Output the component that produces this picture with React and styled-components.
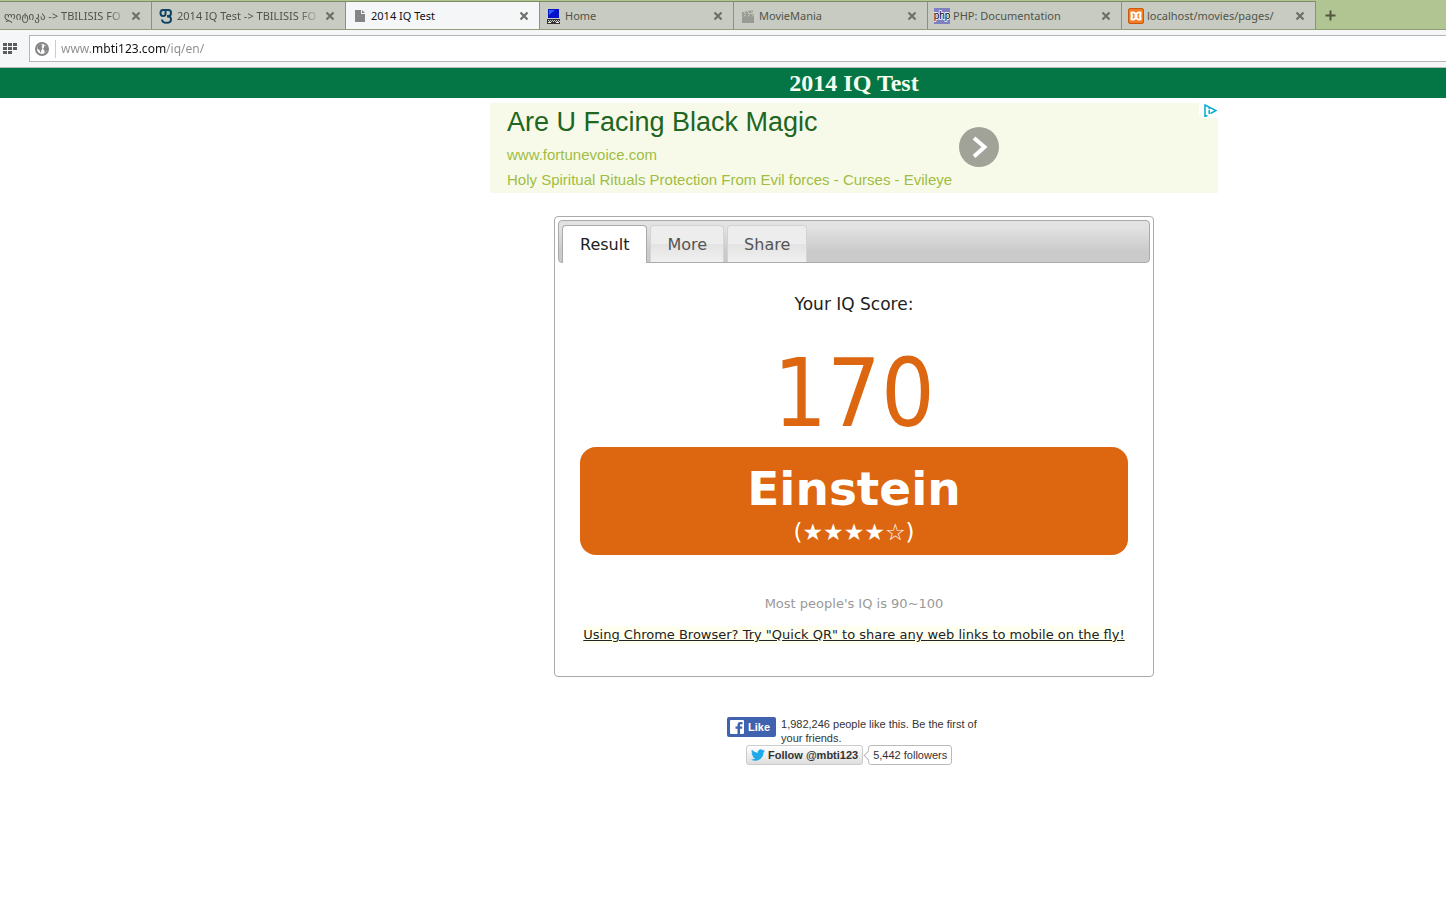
import React, { useState } from "react";
import styled, { createGlobalStyle, css } from "styled-components";

const GlobalStyle = createGlobalStyle`
  * {
    box-sizing: border-box;
  }
  body {
    margin: 0;
    background-color: #fff;
    overflow-x: hidden;
  }
  button {
    font: inherit;
    cursor: pointer;
  }
`;

const uiFont = `"Noto Sans", "Open Sans", "DejaVu Sans", sans-serif`;
const pageFont = `"DejaVu Sans", Verdana, sans-serif`;
const adFont = `"Liberation Sans", Arial, sans-serif`;

/* ---------- browser ---------- */

const TabStrip = styled.div`
  display: flex;
  height: 30px;
  padding-top: 1px;
  background-color: #b1c592;
  border-bottom: 1px solid #929d7a;
  overflow: hidden;
`;

const BrowserTab = styled.div`
  flex: 0 0 ${(props) => (props.$clipped ? "152px" : "194px")};
  display: flex;
  align-items: center;
  gap: 3px;
  height: ${(props) => (props.$active ? "29px" : "28px")};
  padding: 0 10px 0 ${(props) => (props.$clipped ? "4px" : "6px")};
  background-color: ${(props) => (props.$active ? "#f5f6f8" : "#c8cbc1")};
  border-top: 1px solid #7d8a63;
  border-right: 1px solid #8b9180;
  font-family: ${uiFont};
  font-size: 11px;
  color: ${(props) => (props.$active ? "#111" : "#50534b")};
`;

const TabLabel = styled.span`
  flex: 1;
  min-width: 0;
  overflow: hidden;
  white-space: nowrap;
  line-height: 20px;
  ${(props) =>
    props.$fade &&
    css`
      mask-image: linear-gradient(90deg, #000 84%, transparent 100%);
    `}
`;

const IconButton = styled.button`
  display: flex;
  align-items: center;
  justify-content: center;
  padding: 0;
  border: none;
  background: transparent;
`;

const NewTab = styled(IconButton)`
  width: 28px;
  height: 28px;
`;

const Toolbar = styled.div`
  display: flex;
  align-items: center;
  height: 38px;
  padding-left: 3px;
  background-color: #f5f6f8;
  border-bottom: 1px solid #b9bbc0;
`;

const AddressBar = styled.label`
  flex: 1;
  display: flex;
  align-items: center;
  height: 27px;
  margin-left: 12px;
  padding-left: 5px;
  background-color: #fff;
  border: 1px solid #b3b5b8;
  border-right: none;
`;

const Divider = styled.span`
  width: 1px;
  height: 18px;
  margin: 0 5px 0 6px;
  background-color: #ccc;
`;

/* the domain is darker than the rest of the address */
const AddressInput = styled.input`
  flex: 1;
  min-width: 0;
  height: 22px;
  padding: 0;
  border: none;
  outline: none;
  font-family: ${uiFont};
  font-size: 12px;
  color: transparent;
  background-image: linear-gradient(
    90deg,
    #8c8c8c 30px,
    #111 30px,
    #111 105px,
    #8c8c8c 105px
  );
  background-clip: text;
`;

/* ---------- page ---------- */

const Header = styled.header`
  padding-left: 262px;
  background-color: #047646;
`;

const Title = styled.h1`
  margin: 0;
  font-family: Georgia, "Liberation Serif", serif;
  font-size: 24px;
  line-height: 30px;
  text-align: center;
  color: #f4fff0;
`;

const Main = styled.main`
  display: flex;
  flex-direction: column;
  align-items: center;
  padding: 5px 0 40px 262px;
  font-family: ${pageFont};
`;

const Ad = styled.section`
  display: flex;
  width: 100%;
  max-width: 728px;
  height: 90px;
  padding-left: 17px;
  background-color: #f8fae9;
  font-family: ${adFont};
`;

const AdText = styled.div`
  display: flex;
  flex-direction: column;
  width: 452px;
`;

const AdTitle = styled.a`
  font-size: 27px;
  line-height: 39px;
  text-decoration: none;
  color: #206622;
`;

const AdLine = styled.a`
  font-size: 15px;
  line-height: 25px;
  white-space: nowrap;
  text-decoration: none;
  color: #9fbd43;
`;

const AdArrow = styled(IconButton)`
  width: 40px;
  height: 40px;
  margin-top: 24px;
  border-radius: 50%;
  background-color: #a1a398;
`;

const AdChoices = styled(IconButton)`
  width: 19px;
  height: 15px;
  padding-left: 3px;
  margin-left: auto;
  background-color: #fff;
  border-radius: 0 0 0 4px;
`;

const Widget = styled.section`
  width: 100%;
  max-width: 600px;
  margin-top: 23px;
  padding: 3px;
  border: 1px solid #aaa;
  border-radius: 4px;
  color: #222;
`;

const TabList = styled.div`
  display: flex;
  align-items: flex-start;
  gap: 3px;
  height: 43px;
  padding: 4px 3px 0;
  border: 1px solid #aaa;
  border-radius: 4px;
  background-image: linear-gradient(#e2e2e2 15%, #cacaca 75%);
`;

const WidgetTab = styled.button`
  height: ${(props) => (props.$active ? "38px" : "37px")};
  padding: 0 ${(props) => (props.$active ? "17px" : "16px")};
  border: 1px solid ${(props) => (props.$active ? "#aaa" : "#d3d3d3")};
  border-bottom: none;
  border-radius: 4px 4px 0 0;
  background: ${(props) =>
    props.$active ? "#fff" : "linear-gradient(#ededed 50%, #e3e3e3 51%, #f0f0f0)"};
  font-size: 16px;
  color: ${(props) => (props.$active ? "#212121" : "#555")};
`;

const Panel = styled.div`
  display: flex;
  flex-direction: column;
  align-items: center;
  padding: 29px 22px 29px;
  text-align: center;
`;

const Caption = styled.p`
  margin: 0;
  font-size: 17px;
  line-height: 24px;
`;

const Score = styled.strong`
  margin-top: 24px;
  font-family: "DejaVu Sans Condensed", Tahoma, sans-serif;
  font-size: 94px;
  font-weight: 400;
  line-height: 107px;
  color: #dd6610;
`;

const Rank = styled.div`
  width: 100%;
  height: 108px;
  padding-top: 12px;
  border-radius: 16px;
  background-color: #dd6610;
  color: #fff;
`;

const RankName = styled.div`
  font-size: 47px;
  font-weight: 700;
  line-height: 60px;
`;

const Stars = styled.div`
  font-size: 23px;
  line-height: 26px;
`;

const Note = styled.p`
  margin: 37px 0 0;
  font-size: 13px;
  line-height: 24px;
  color: #999;
`;

const PromoLink = styled.a`
  margin-top: 10px;
  background-color: #fffff0;
  font-size: 13px;
  line-height: 18px;
  white-space: nowrap;
  color: #222;
`;

const Social = styled.footer`
  display: flex;
  flex-direction: column;
  margin-top: 40px;
  font-family: ${adFont};
  font-size: 11px;
  line-height: 14px;
  color: #333;
`;

const LikeRow = styled.div`
  display: flex;
  align-items: flex-start;
  gap: 5px;
  width: 254px;
`;

const LikeButton = styled.button`
  display: flex;
  align-items: center;
  gap: 4px;
  height: 20px;
  padding: 0 6px 0 3px;
  border: none;
  border-radius: 2px;
  background-color: #4162ae;
  font-weight: 700;
  color: #fff;
`;

const LikeText = styled.span`
  flex: 1;
`;

const FollowRow = styled.div`
  display: flex;
  gap: 5px;
  padding-left: 19px;
`;

const FollowButton = styled.button`
  display: flex;
  align-items: center;
  gap: 3px;
  height: 20px;
  padding: 0 4px;
  border: 1px solid #ccc;
  border-radius: 3px;
  background-image: linear-gradient(#fff, #dedede);
  font-weight: 700;
  color: #333;
  white-space: nowrap;
`;

const Bubble = styled.a`
  position: relative;
  height: 20px;
  padding: 0 4px;
  border: 1px solid #bbb;
  border-radius: 3px;
  line-height: 18px;
  white-space: nowrap;
  text-decoration: none;
  color: #333;
  &::before {
    content: "";
    position: absolute;
    left: -4px;
    top: 6px;
    width: 6px;
    height: 6px;
    border-left: 1px solid #bbb;
    border-bottom: 1px solid #bbb;
    background-color: #fff;
    transform: rotate(45deg);
  }
`;

/* ---------- icons ---------- */

const CloseIcon = () => (
  <svg width="10" height="10" viewBox="0 0 10 10">
    <path d="M1.5 1.5l7 7M8.5 1.5l-7 7" stroke="#6d7069" strokeWidth="2.2" />
  </svg>
);

const PlusIcon = () => (
  <svg width="11" height="11" viewBox="0 0 11 11">
    <path d="M5.5 0.5v10M0.5 5.5h10" stroke="#50563f" strokeWidth="2" />
  </svg>
);

const ForumIcon = () => (
  <svg width="16" height="16" viewBox="0 0 16 16" fill="none" stroke="#0f4263" strokeWidth="2">
    <path d="M7.500 2.500v3.500Q7.500 8 5 8T2.500 5 5 2h5.500Q13 2 13 5 13 8.300 9 8.300" />
    <path d="M9 8.300Q13 8.300 13 11.500 13 14.800 8.500 14.800 4.200 14.800 4 11.500" />
  </svg>
);

const FileIcon = () => (
  <svg width="16" height="16" viewBox="0 0 16 16">
    <path d="M3 2h6v4h4v8H3z" fill="#858585" />
    <path d="M10 2l3 3h-3z" fill="#858585" />
  </svg>
);

const LaptopIcon = () => (
  <svg width="16" height="16" viewBox="0 0 16 16">
    <path d="M2 1h11v9H2z" fill="#0713c8" />
    <path d="M3 2h6L3 7z" fill="#2a60ff" />
    <path d="M1 11h13v5H1z" fill="#333" />
    <path d="M2 12.500h11M3 13.500h11" stroke="#ccc" strokeDasharray="1 1" />
    <path d="M2 14.500h3M10 14.500h3" stroke="#eee" />
  </svg>
);

const ClapperIcon = () => (
  <svg width="16" height="16" viewBox="0 0 16 16">
    <path d="M2 6h12v9H2z" fill="#979b93" />
    <path d="M1.500 4.500l11-2.500.6 2.500-11 2.300z" fill="#979b93" />
    <path d="M4 4l1.500 2M7.500 3.200l1.500 2M11 2.400l1.500 2M4 8.500l1.500-2M8 8.500l1.500-2M12 8.500l1.500-2" stroke="#c8cbc1" />
  </svg>
);

const PhpIcon = () => (
  <svg width="16" height="16" viewBox="0 0 16 16">
    <rect width="16" height="16" fill="#8080c0" />
    <text
      x="8"
      y="11"
      textAnchor="middle"
      fontFamily="Liberation Sans"
      fontSize="10"
      fill="#000"
      stroke="#fff"
      strokeWidth="1.500"
      paintOrder="stroke"
    >
      php
    </text>
  </svg>
);

const XamppIcon = () => (
  <svg width="16" height="16" viewBox="0 0 16 16">
    <rect x="0.5" y="0.5" width="15" height="15" rx="1.500" fill="#f47b20" stroke="#c65a10" />
    <path
      d="M3.500 4.500H6L8 6.500l2-2h2.500v2.500l-1 1 1 1v2.500H10L8 9.500l-2 2H3.500V9l1-1-1-1z"
      fill="none"
      stroke="#fff"
      strokeWidth="2"
      strokeLinejoin="round"
    />
    <path d="M6.500 8h3" stroke="#fff" strokeWidth="2" />
  </svg>
);

const GridIcon = () => (
  <svg width="14" height="12" viewBox="0 0 14 12" fill="#5c5c5c">
    {[0, 4, 8].map((y) =>
      [0, 5, 10].map((x) =>
        x === 10 && y === 8 ? null : <rect key={`${x}-${y}`} x={x} y={y} width="4" height="3" />
      )
    )}
  </svg>
);

const GlobeIcon = () => (
  <svg width="14" height="14" viewBox="0 0 14 14">
    <circle cx="7" cy="7" r="6" fill="#fff" stroke="#858585" strokeWidth="2" />
    <path d="M2.500 4l3-2 2 1-1 2 1 1-1 2-1 3-1-3-2-1z" fill="#858585" />
    <path d="M9 3.500l2.500 1 1 2.500-1.500 3-1.500 1V8.500L8 7l1-1.500z" fill="#858585" />
  </svg>
);

const ChevronIcon = () => (
  <svg width="40" height="40" viewBox="0 0 40 40">
    <path d="M15 11l10.500 9L15 29.500" fill="none" stroke="#fff" strokeWidth="4" />
  </svg>
);

const AdChoicesIcon = () => (
  <svg width="13" height="13" viewBox="0 0 13 13" fill="none" stroke="#00aecd">
    <path d="M3.500 11.500L1 12.500V1l11 5.500-5.500 3" strokeWidth="1.500" />
    <path d="M5.200 3.500v1.500M5.200 6v4" strokeWidth="1.500" />
  </svg>
);

const FacebookIcon = () => (
  <svg width="14" height="14" viewBox="0 0 14 14">
    <rect width="14" height="14" rx="1" fill="#fff" />
    <path
      d="M7.500 14V8.800H5.500V6.500h2V5c0-2 1-3 3-3h2v2.200H11c-.8 0-1 .4-1 1v1.300h2.400L12 8.800h-2V14z"
      fill="#4162ae"
    />
  </svg>
);

const TwitterIcon = () => (
  <svg width="14" height="14" viewBox="0 0 24 24" fill="#20a9e8">
    <path d="M23.950 4.570a10 10 0 0 1-2.820.770 4.960 4.960 0 0 0 2.160-2.720c-.950.550-2 .960-3.130 1.180a4.920 4.920 0 0 0-8.380 4.480C7.690 8.090 4.070 6.130 1.640 3.160a4.820 4.820 0 0 0-.670 2.480c0 1.710.870 3.210 2.190 4.100a4.900 4.900 0 0 1-2.230-.620v.060a4.920 4.920 0 0 0 3.950 4.830 5 5 0 0 1-2.210.080 4.940 4.940 0 0 0 4.600 3.420A9.870 9.870 0 0 1 0 19.540a13.990 13.990 0 0 0 7.550 2.210c9.050 0 14-7.500 14-13.980 0-.210 0-.420-.020-.630a9.940 9.940 0 0 0 2.460-2.550z" />
  </svg>
);

const browserTabs = [
  { label: "ლიტიკა -> TBILISIS FO", clipped: true, fade: true },
  { label: "2014 IQ Test -> TBILISIS FO", icon: <ForumIcon />, fade: true },
  { label: "2014 IQ Test", icon: <FileIcon />, active: true },
  { label: "Home", icon: <LaptopIcon /> },
  { label: "MovieMania", icon: <ClapperIcon /> },
  { label: "PHP: Documentation", icon: <PhpIcon /> },
  { label: "localhost/movies/pages/", icon: <XamppIcon /> },
];

const widgetTabs = ["Result", "More", "Share"];

const Browser = () => {
  const [url, setUrl] = useState("www.mbti123.com/iq/en/");

  return (
    <>
      <TabStrip>
        {browserTabs.map((tab) => (
          <BrowserTab key={tab.label} $active={tab.active} $clipped={tab.clipped}>
            {tab.icon}
            <TabLabel $fade={tab.fade}>{tab.label}</TabLabel>
            <IconButton aria-label="Close tab">
              <CloseIcon />
            </IconButton>
          </BrowserTab>
        ))}
        <NewTab aria-label="New tab">
          <PlusIcon />
        </NewTab>
      </TabStrip>
      <Toolbar>
        <IconButton aria-label="Speed dial">
          <GridIcon />
        </IconButton>
        <AddressBar>
          <GlobeIcon />
          <Divider />
          <AddressInput
            aria-label="Address"
            value={url}
            onChange={(e) => setUrl(e.target.value)}
          />
        </AddressBar>
      </Toolbar>
    </>
  );
};

const App = () => {
  const [current, setCurrent] = useState("Result");

  return (
    <>
      <GlobalStyle />
      <Browser />
      <Header>
        <Title>2014 IQ Test</Title>
      </Header>
      <Main>
        <Ad>
          <AdText>
            <AdTitle href="#">Are U Facing Black Magic</AdTitle>
            <AdLine href="#">www.fortunevoice.com</AdLine>
            <AdLine href="#">Holy Spiritual Rituals Protection From Evil forces - Curses - Evileye</AdLine>
          </AdText>
          <AdArrow aria-label="Open ad">
            <ChevronIcon />
          </AdArrow>
          <AdChoices aria-label="AdChoices">
            <AdChoicesIcon />
          </AdChoices>
        </Ad>

        <Widget>
          <TabList role="tablist">
            {widgetTabs.map((name) => (
              <WidgetTab
                key={name}
                role="tab"
                aria-selected={current === name}
                $active={current === name}
                onClick={() => setCurrent(name)}
              >
                {name}
              </WidgetTab>
            ))}
          </TabList>
          <Panel>
            <Caption>Your IQ Score:</Caption>
            <Score>170</Score>
            <Rank>
              <RankName>Einstein</RankName>
              <Stars>(★★★★☆)</Stars>
            </Rank>
            <Note>Most people's IQ is 90~100</Note>
            <PromoLink href="#">
              Using Chrome Browser? Try "Quick QR" to share any web links to mobile on the fly!
            </PromoLink>
          </Panel>
        </Widget>

        <Social>
          <LikeRow>
            <LikeButton>
              <FacebookIcon />
              Like
            </LikeButton>
            <LikeText>1,982,246 people like this. Be the first of your friends.</LikeText>
          </LikeRow>
          <FollowRow>
            <FollowButton>
              <TwitterIcon />
              Follow @mbti123
            </FollowButton>
            <Bubble href="#">5,442 followers</Bubble>
          </FollowRow>
        </Social>
      </Main>
    </>
  );
};

export default App;
